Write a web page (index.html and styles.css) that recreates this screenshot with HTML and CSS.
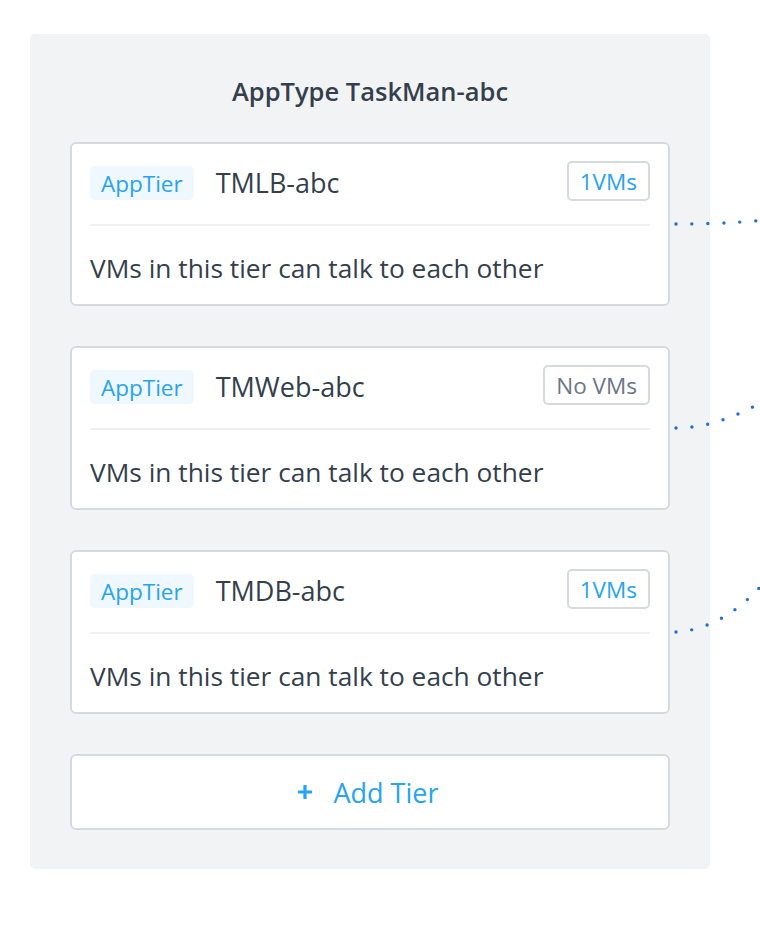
FILE: index.html
```html
<!DOCTYPE html>
<html>
<head>
<meta charset="utf-8">
<link rel="stylesheet" href="styles.css">
</head>
<body>
<div class="panel">
  <div class="title">AppType TaskMan-abc</div>
  <div class="list">
    <div class="card">
      <div class="card-head">
        <span class="tag">AppTier</span>
        <span class="name">TMLB-abc</span>
        <span class="badge">1VMs</span>
      </div>
      <div class="card-body">VMs in this tier can talk to each other</div>
    </div>
    <div class="card">
      <div class="card-head">
        <span class="tag">AppTier</span>
        <span class="name">TMWeb-abc</span>
        <span class="badge badge-empty">No VMs</span>
      </div>
      <div class="card-body">VMs in this tier can talk to each other</div>
    </div>
    <div class="card">
      <div class="card-head">
        <span class="tag">AppTier</span>
        <span class="name">TMDB-abc</span>
        <span class="badge">1VMs</span>
      </div>
      <div class="card-body">VMs in this tier can talk to each other</div>
    </div>
    <div class="add">
      <svg class="plus" width="16" height="16" viewBox="0 0 16 16"><path d="M8 1v14M1 8h14" stroke="#26a3f2" stroke-width="3.2" fill="none"/></svg>
      <span>Add Tier</span>
    </div>
  </div>
</div>
<svg class="links" width="760" height="928" viewBox="0 0 760 928">
  <g fill="none" stroke="#1f6fd2" stroke-width="3.4" stroke-linecap="round" stroke-dasharray="0 16">
    <path d="M676 224 C 705 224, 735 223, 766 220"/>
    <path d="M676 428 C 702 428, 730 420, 762 402"/>
    <path d="M676 632 C 700 631, 735 618, 766 580"/>
  </g>
</svg>
</body>
</html>
```
FILE: styles.css
```css
html, body {
  margin: 0;
  padding: 0;
  background: #ffffff;
}
body {
  width: 760px;
  height: 928px;
  position: relative;
  overflow: hidden;
  font-family: "Open Sans", "Liberation Sans", sans-serif;
  color: #343f4c;
}
.panel {
  margin: 34px 0 0 30px;
  width: 680px;
  box-sizing: border-box;
  padding: 0 40px 39px 40px;
  background: #f2f3f5;
  border-radius: 5px;
}
.title {
  padding-top: 42px;
  height: 30px;
  line-height: 30px;
  margin-bottom: 36px;
  text-align: center;
  font-size: 25.5px;
  font-weight: 600;
  color: #343f4c;
}
.list {
  display: flex;
  flex-direction: column;
  gap: 40px;
}
.card {
  background: #ffffff;
  border: 2px solid #d6dade;
  border-radius: 6px;
  padding: 17px 18px 0 18px;
  height: 164px;
  box-sizing: border-box;
}
.card-head {
  display: flex;
  align-items: center;
  height: 40px;
  padding-bottom: 23px;
  border-bottom: 2px solid #eff0f2;
}
.tag {
  display: inline-flex;
  align-items: center;
  height: 34px;
  margin-top: 4px;
  padding: 0 11px;
  background: #eef8fe;
  border-radius: 5px;
  color: #26a3f2;
  font-size: 22.5px;
}
.name {
  margin-left: 22px;
  margin-top: 3px;
  font-size: 27px;
  color: #343f4c;
}
.badge {
  margin-left: auto;
  height: 40px;
  box-sizing: border-box;
  display: inline-flex;
  align-items: center;
  padding: 0 11px;
  border: 2px solid #d6dade;
  border-radius: 5px;
  color: #26a3f2;
  font-size: 22.5px;
}
.badge-empty {
  color: #6b7785;
}
.card-body {
  padding-top: 27px;
  line-height: 30px;
  font-size: 26.3px;
  color: #343f4c;
}
.add {
  height: 76px;
  box-sizing: border-box;
  background: #ffffff;
  border: 2px solid #d6dade;
  border-radius: 6px;
  display: flex;
  align-items: center;
  justify-content: center;
  gap: 20px;
  color: #26a3f2;
  font-size: 27px;
  padding-right: 4px;
}
.plus {
  display: block;
}
.links {
  position: absolute;
  left: 0;
  top: 0;
  pointer-events: none;
}
```
